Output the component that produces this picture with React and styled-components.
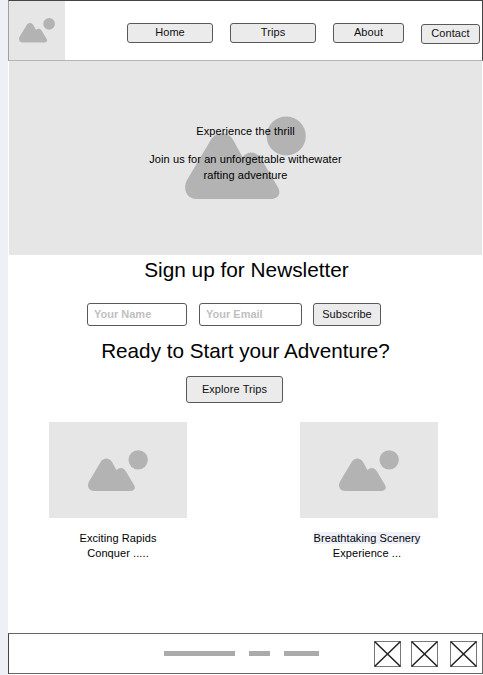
import React from "react";
import styled, { createGlobalStyle } from "styled-components";

const GlobalStyle = createGlobalStyle`
  *, *::before, *::after { box-sizing: border-box; }
  body {
    margin: 0;
    background: #edf1f6;
    font-family: "Liberation Sans", Arial, sans-serif;
    font-size: 11px;
    color: #000;
  }
`;

const Page = styled.div`
  display: flex;
  flex-direction: column;
  height: 675px;
  margin-left: 8px;
  background: #fff;
  overflow: hidden;
`;

const Header = styled.header`
  display: flex;
  height: 61px;
  flex: none;
  border: 1px solid #444;
  border-left-color: #a0a0a0;
  border-bottom-color: #b4b4b4;
`;

const Placeholder = styled.div`
  display: flex;
  flex: none;
  width: ${(p) => p.$w}px;
  height: ${(p) => p.$h}px;
  padding: ${(p) => p.$pad};
  background: #e6e6e6;
`;

const Picture = styled.svg`
  display: block;
  flex: none;
  fill: #b3b3b3;
`;

const Nav = styled.nav`
  display: flex;
  align-items: flex-start;
  gap: 17px;
  padding: 22px 0 0 62px;
`;

const Button = styled.button`
  flex: none;
  width: ${(p) => p.$w}px;
  height: ${(p) => p.$h}px;
  margin: ${(p) => p.$m || 0};
  padding: ${(p) => p.$pad || 0};
  border: 1px solid #595959;
  border-radius: 3px;
  background: #ebebeb;
  color: #111;
  font: inherit;
  line-height: 13px;
  letter-spacing: 0.08px;
  text-align: center;
  white-space: nowrap;
`;

const Hero = styled.section`
  display: grid;
  flex: none;
  height: 194px;
  margin: 0 1px 0 1px;
  background: #e6e6e6;
  > * { grid-area: 1 / 1; }
`;

const HeroPicture = styled(Picture)`
  margin: 55px 0 0 176px;
`;

const HeroCopy = styled.div`
  z-index: 1;
  padding-top: 62px;
  text-align: center;
  line-height: 16px;
  letter-spacing: 0.09px;
  p { margin: 0 0 12px; }
`;

const Title = styled.h2`
  flex: none;
  height: 26px;
  margin: ${(p) => p.$m};
  font-size: ${(p) => p.$size}px;
  font-weight: 400;
  line-height: 26px;
  text-align: center;
  white-space: nowrap;
`;

const Form = styled.form`
  display: flex;
  gap: 12px;
  margin: 20px 0 0 79px;
`;

const Field = styled.input`
  flex: none;
  width: ${(p) => p.$w}px;
  height: 23px;
  padding: 0 6px 2px;
  border: 1px solid #595959;
  border-radius: 3px;
  background: #fff;
  font: bold 11px "Liberation Sans", Arial, sans-serif;
  &::placeholder { color: #bfbfbf; opacity: 1; }
`;

const Cards = styled.section`
  display: flex;
  gap: 113px;
  flex: none;
  height: 211px;
  margin: 19px 0 0 41px;
`;

const Card = styled.article`
  flex: none;
  width: 138px;
`;

const Caption = styled.p`
  margin: 13px 0 0;
  padding-right: ${(p) => p.$shift || 0}px;
  line-height: 15px;
  letter-spacing: 0.08px;
  text-align: center;
  white-space: nowrap;
`;

const Highlight = styled.span`
  background: ${(p) => (p.$on ? "#edf0f8" : "transparent")};
`;

const Footer = styled.footer`
  display: flex;
  align-items: flex-start;
  flex: none;
  height: 41px;
  border: 1px solid #666;
  border-left-color: #444;
`;

const Links = styled.div`
  display: flex;
  gap: 14px;
  width: 210px;
  margin: 17px 0 0 155px;
`;

const LinkBar = styled.span`
  width: ${(p) => p.$w}px;
  height: 5px;
  background: #aaa;
`;

const Socials = styled.div`
  display: flex;
  padding-top: 7px;
`;

const Cross = styled.svg`
  display: block;
  flex: none;
  margin-right: ${(p) => p.$gap || 0}px;
  fill: none;
  stroke: #222;
`;

function Mountains({ as: Base = Picture, width, height }) {
  return (
    <Base width={width} height={height} viewBox="185 116 121 83.2" preserveAspectRatio="none">
      <path d="M198 199.2C186 199.2 182.500 189 187 180L210.500 140.500C216 131 228 131 233.500 140.500L242.500 157C247.500 150.800 256 150.800 261 158.500L277.500 186.500C282 194 278 199.200 270 199.200Z" />
      <circle cx="286.200" cy="136" r="19.600" />
    </Base>
  );
}

function CrossBox({ gap }) {
  return (
    <Cross width="27" height="26" viewBox="0 0 27 26" $gap={gap}>
      <path stroke="#777" d="M.5.5h26v25H.5z" />
      <path strokeWidth="1.500" d="M.5.5l26 25M26.500.5l-26 25" />
    </Cross>
  );
}

export default function App() {
  return (
    <>
      <GlobalStyle />
      <Page>
        <Header>
          <Placeholder $w={56} $h={59} $pad="17px 0 0 10px">
            <Mountains width={36} height={24.500} />
          </Placeholder>
          <Nav>
            <Button $w={86} $h={20} $pad="0 0 1px">Home</Button>
            <Button $w={86} $h={20} $pad="0 0 1px">Trips</Button>
            <Button $w={71} $h={20} $pad="0 0 1px">About</Button>
            <Button $w={59} $h={20} $m="1px 0 0" $pad="0 0 1px">Contact</Button>
          </Nav>
        </Header>
        <Hero>
          <Mountains as={HeroPicture} width={121} height={83.200} />
          <HeroCopy>
            <p>Experience the thrill</p>
            <p>
              Join us for an unforgettable withewater
              <br />
              rafting adventure
            </p>
          </HeroCopy>
        </Hero>
        <Title $m="2px 0 0 2px" $size={20.8}>Sign up for Newsletter</Title>
        <Form onSubmit={(e) => e.preventDefault()}>
          <Field $w={100} placeholder="Your Name" />
          <Field $w={103} placeholder="Your Email" />
          <Button type="submit" $w={68} $h={23} $m="0 0 0 -1px">Subscribe</Button>
        </Form>
        <Title $m="12px 0 0" $size={20.7}>Ready to Start your Adventure?</Title>
        <Button $w={97} $h={27} $m="12px 0 0 178px">Explore Trips</Button>
        <Cards>
          <Card>
            <Placeholder $w={138} $h={96} $pad="28px 0 0 39px">
              <Mountains width={60} height={41} />
            </Placeholder>
            <Caption>
              <Highlight>Exciting Rapids</Highlight>
              <br />
              Conquer .....
            </Caption>
          </Card>
          <Card>
            <Placeholder $w={138} $h={96} $pad="28px 0 0 39px">
              <Mountains width={60} height={41} />
            </Placeholder>
            <Caption $shift={4}>
              <Highlight $on>Breathtaking Scenery</Highlight>
              <br />
              Experience ...
            </Caption>
          </Card>
        </Cards>
        <Footer>
          <Links>
            <LinkBar $w={71} />
            <LinkBar $w={21} />
            <LinkBar $w={35} />
          </Links>
          <Socials>
            <CrossBox gap={10} />
            <CrossBox gap={12} />
            <CrossBox />
          </Socials>
        </Footer>
      </Page>
    </>
  );
}
